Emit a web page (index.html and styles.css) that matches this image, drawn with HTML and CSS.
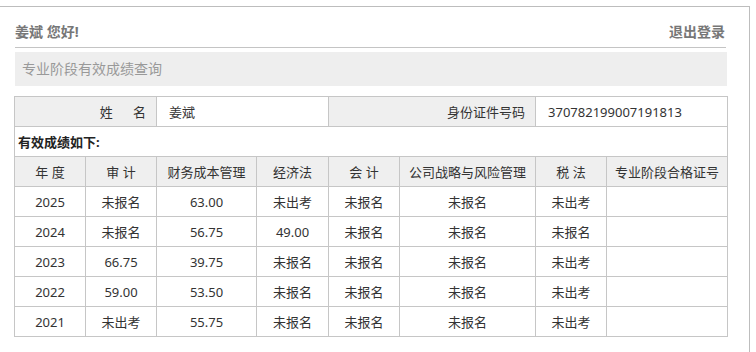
FILE: index.html
```html
<!DOCTYPE html>
<html lang="zh-CN">
<head>
<meta charset="utf-8">
<title>专业阶段有效成绩查询</title>
<link rel="stylesheet" href="styles.css">
</head>
<body>
<div class="frame">
  <div class="topbar">
    <span class="greet">姜斌 您好!</span>
    <a class="logout" href="#">退出登录</a>
  </div>
  <div class="titlebar">专业阶段有效成绩查询</div>
  <table class="grid">
    <colgroup>
      <col style="width:71px"><col style="width:71px"><col style="width:100px"><col style="width:72px">
      <col style="width:71px"><col style="width:136px"><col style="width:71px"><col style="width:121px">
    </colgroup>
    <tr>
      <td class="label" colspan="2">姓&nbsp;&nbsp;&nbsp;&nbsp;&nbsp;&nbsp;名</td>
      <td class="value" colspan="2">姜斌</td>
      <td class="label" colspan="2">身份证件号码</td>
      <td class="value" colspan="2">370782199007191813</td>
    </tr>
    <tr>
      <td class="caption" colspan="8">有效成绩如下:</td>
    </tr>
    <tr class="head">
      <td>年 度</td><td>审 计</td><td>财务成本管理</td><td>经济法</td><td>会 计</td><td>公司战略与风险管理</td><td>税 法</td><td>专业阶段合格证号</td>
    </tr>
    <tr><td>2025</td><td>未报名</td><td>63.00</td><td>未出考</td><td>未报名</td><td>未报名</td><td>未出考</td><td></td></tr>
    <tr><td>2024</td><td>未报名</td><td>56.75</td><td>49.00</td><td>未报名</td><td>未报名</td><td>未报名</td><td></td></tr>
    <tr><td>2023</td><td>66.75</td><td>39.75</td><td>未报名</td><td>未报名</td><td>未报名</td><td>未出考</td><td></td></tr>
    <tr><td>2022</td><td>59.00</td><td>53.50</td><td>未报名</td><td>未报名</td><td>未报名</td><td>未出考</td><td></td></tr>
    <tr><td>2021</td><td>未出考</td><td>55.75</td><td>未报名</td><td>未报名</td><td>未报名</td><td>未出考</td><td></td></tr>
  </table>
</div>
</body>
</html>
```

FILE: styles.css
```css
html, body {
  margin: 0;
  padding: 0;
  background: #fff;
}
body {
  font-family: "Noto Sans", "Noto Sans CJK SC", sans-serif;
  color: #333;
}
.frame {
  margin-top: 6px;
  width: 735px;
  height: 345px;
  padding-left: 14px;
  border-top: 1px solid #bdbdbd;
  border-right: 1px solid #bdbdbd;
  box-sizing: content-box;
}
.topbar {
  display: flex;
  justify-content: space-between;
  align-items: center;
  width: 711px;
  margin-left: 1px;
  padding-top: 16px;
  padding-bottom: 6px;
  line-height: 18px;
  font-size: 14px;
  font-weight: bold;
  color: #777;
  border-bottom: 1px solid #c4c4c4;
}
.logout {
  color: #777;
  text-decoration: none;
  padding-right: 1px;
}
.titlebar {
  margin-top: 4px;
  margin-left: 1px;
  width: 705px;
  height: 34px;
  line-height: 34px;
  padding-left: 7px;
  background: #eeeeee;
  font-size: 14px;
  color: #999;
}
.grid {
  margin-top: 10px;
  width: 713px;
  table-layout: fixed;
  border-collapse: collapse;
  font-size: 13px;
  color: #333;
}
.grid td {
  border: 1px solid #c6c6c6;
  height: 29px;
  padding: 0;
  text-align: center;
  white-space: nowrap;
}
.grid td.label {
  background: #efefef;
  text-align: right;
  padding-right: 10px;
}
.grid td.value {
  text-align: left;
  padding-left: 12px;
}
.grid td.caption {
  text-align: left;
  padding-left: 3px;
  font-weight: bold;
  color: #222;
}
.grid tr.head td {
  background: #efefef;
}
```
